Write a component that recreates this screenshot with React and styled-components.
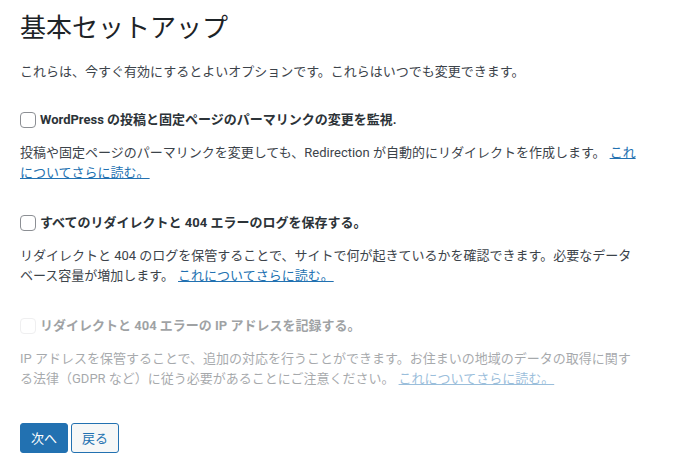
import React from "react";
import styled, { createGlobalStyle } from "styled-components";

const GlobalStyle = createGlobalStyle`
  html, body {
    margin: 0;
    padding: 0;
    background: #fff;
  }
  body {
    font-family: Roboto, "Noto Sans CJK JP", "Noto Sans", sans-serif;
    color: #3c434a;
  }
`;

const Page = styled.div`
  width: 618px;
  padding: 9px 20px 20px;
`;

const Title = styled.h1`
  margin: 0;
  font-size: 26px;
  font-weight: 400;
  line-height: 38px;
  color: #1d2327;
`;

const Intro = styled.p`
  margin: 15px 0 28px;
  font-size: 13px;
  line-height: 20px;
`;

const Option = styled.div`
  margin-bottom: 30px;
  opacity: ${(p) => (p.disabled ? 0.45 : 1)};
`;

const Label = styled.label`
  display: flex;
  align-items: center;
  gap: 4px;
  font-size: 13px;
  font-weight: 700;
  line-height: 20px;
  color: #2c3338;
`;

const Box = styled.span`
  width: 14px;
  height: 14px;
  border: 1px solid ${(p) => (p.disabled ? "#dcdcde" : "#8c8f94")};
  border-radius: 4px;
  background: #fff;
  flex: none;
`;

const Desc = styled.p`
  margin: 13px 0 0;
  font-size: 13px;
  line-height: 20px;
`;

const More = styled.a`
  color: #2271b1;
  text-decoration: underline;
  margin-left: 4px;
`;

const Actions = styled.div`
  display: flex;
  gap: 3px;
  margin-top: 34px;
`;

const Button = styled.button`
  font-family: inherit;
  font-size: 13px;
  line-height: 27px;
  height: 30px;
  padding: 0 10px;
  border-radius: 3px;
  border: 1px solid #2271b1;
  background: ${(p) => (p.primary ? "#2271b1" : "#f6f7f7")};
  color: ${(p) => (p.primary ? "#fff" : "#2271b1")};
  cursor: pointer;
`;

const options = [
  {
    label: "WordPress の投稿と固定ページのパーマリンクの変更を監視.",
    desc: "投稿や固定ページのパーマリンクを変更しても、Redirection が自動的にリダイレクトを作成します。",
  },
  {
    label: "すべてのリダイレクトと 404 エラーのログを保存する。",
    desc: "リダイレクトと 404 のログを保管することで、サイトで何が起きているかを確認できます。必要なデータベース容量が増加します。",
  },
  {
    label: "リダイレクトと 404 エラーの IP アドレスを記録する。",
    desc: "IP アドレスを保管することで、追加の対応を行うことができます。お住まいの地域のデータの取得に関する法律（GDPR など）に従う必要があることにご注意ください。",
    disabled: true,
  },
];

export default function App() {
  return (
    <>
      <GlobalStyle />
      <Page>
        <Title>基本セットアップ</Title>
        <Intro>これらは、今すぐ有効にするとよいオプションです。これらはいつでも変更できます。</Intro>
        {options.map((o, i) => (
          <Option key={i} disabled={o.disabled}>
            <Label>
              <Box disabled={o.disabled} />
              {o.label}
            </Label>
            <Desc>
              {o.desc}
              <More href="#">これについてさらに読む。</More>
            </Desc>
          </Option>
        ))}
        <Actions>
          <Button primary>次へ</Button>
          <Button>戻る</Button>
        </Actions>
      </Page>
    </>
  );
}
